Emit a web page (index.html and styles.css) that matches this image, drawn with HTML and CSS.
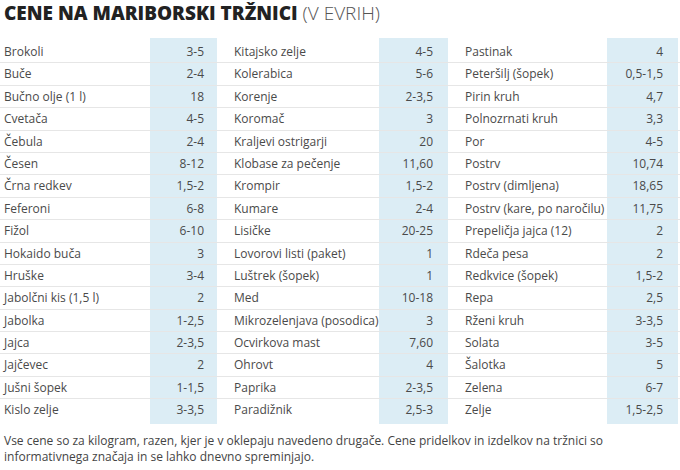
FILE: index.html
```html
<!DOCTYPE html>
<html lang="sl">
<head>
<meta charset="utf-8">
<link rel="stylesheet" href="styles.css">
</head>
<body>
<h1 class="title"><b>CENE NA MARIBORSKI TRŽNICI</b> <span class="unit">(V EVRIH)</span></h1>
<div class="table">
  <div class="col c1">
    <div class="row"><span class="lbl">Brokoli</span><span class="val">3-5</span><span class="sp"></span></div>
    <div class="row"><span class="lbl">Buče</span><span class="val">2-4</span><span class="sp"></span></div>
    <div class="row"><span class="lbl">Bučno olje (1 l)</span><span class="val">18</span><span class="sp"></span></div>
    <div class="row"><span class="lbl">Cvetača</span><span class="val">4-5</span><span class="sp"></span></div>
    <div class="row"><span class="lbl">Čebula</span><span class="val">2-4</span><span class="sp"></span></div>
    <div class="row"><span class="lbl">Česen</span><span class="val">8-12</span><span class="sp"></span></div>
    <div class="row"><span class="lbl">Črna redkev</span><span class="val">1,5-2</span><span class="sp"></span></div>
    <div class="row"><span class="lbl">Feferoni</span><span class="val">6-8</span><span class="sp"></span></div>
    <div class="row"><span class="lbl">Fižol</span><span class="val">6-10</span><span class="sp"></span></div>
    <div class="row"><span class="lbl">Hokaido buča</span><span class="val">3</span><span class="sp"></span></div>
    <div class="row"><span class="lbl">Hruške</span><span class="val">3-4</span><span class="sp"></span></div>
    <div class="row"><span class="lbl">Jabolčni kis (1,5 l)</span><span class="val">2</span><span class="sp"></span></div>
    <div class="row"><span class="lbl">Jabolka</span><span class="val">1-2,5</span><span class="sp"></span></div>
    <div class="row"><span class="lbl">Jajca</span><span class="val">2-3,5</span><span class="sp"></span></div>
    <div class="row"><span class="lbl">Jajčevec</span><span class="val">2</span><span class="sp"></span></div>
    <div class="row"><span class="lbl">Jušni šopek</span><span class="val">1-1,5</span><span class="sp"></span></div>
    <div class="row"><span class="lbl">Kislo zelje</span><span class="val">3-3,5</span><span class="sp"></span></div>
  </div>
  <div class="col c2">
    <div class="row"><span class="lbl">Kitajsko zelje</span><span class="val">4-5</span><span class="sp"></span></div>
    <div class="row"><span class="lbl">Kolerabica</span><span class="val">5-6</span><span class="sp"></span></div>
    <div class="row"><span class="lbl">Korenje</span><span class="val">2-3,5</span><span class="sp"></span></div>
    <div class="row"><span class="lbl">Koromač</span><span class="val">3</span><span class="sp"></span></div>
    <div class="row"><span class="lbl">Kraljevi ostrigarji</span><span class="val">20</span><span class="sp"></span></div>
    <div class="row"><span class="lbl">Klobase za pečenje</span><span class="val">11,60</span><span class="sp"></span></div>
    <div class="row"><span class="lbl">Krompir</span><span class="val">1,5-2</span><span class="sp"></span></div>
    <div class="row"><span class="lbl">Kumare</span><span class="val">2-4</span><span class="sp"></span></div>
    <div class="row"><span class="lbl">Lisičke</span><span class="val">20-25</span><span class="sp"></span></div>
    <div class="row"><span class="lbl">Lovorovi listi (paket)</span><span class="val">1</span><span class="sp"></span></div>
    <div class="row"><span class="lbl">Luštrek (šopek)</span><span class="val">1</span><span class="sp"></span></div>
    <div class="row"><span class="lbl">Med</span><span class="val">10-18</span><span class="sp"></span></div>
    <div class="row"><span class="lbl">Mikrozelenjava (posodica)</span><span class="val">3</span><span class="sp"></span></div>
    <div class="row"><span class="lbl">Ocvirkova mast</span><span class="val">7,60</span><span class="sp"></span></div>
    <div class="row"><span class="lbl">Ohrovt</span><span class="val">4</span><span class="sp"></span></div>
    <div class="row"><span class="lbl">Paprika</span><span class="val">2-3,5</span><span class="sp"></span></div>
    <div class="row"><span class="lbl">Paradižnik</span><span class="val">2,5-3</span><span class="sp"></span></div>
  </div>
  <div class="col c3">
    <div class="row"><span class="lbl">Pastinak</span><span class="val">4</span><span class="sp"></span></div>
    <div class="row"><span class="lbl">Peteršilj (šopek)</span><span class="val">0,5-1,5</span><span class="sp"></span></div>
    <div class="row"><span class="lbl">Pirin kruh</span><span class="val">4,7</span><span class="sp"></span></div>
    <div class="row"><span class="lbl">Polnozrnati kruh</span><span class="val">3,3</span><span class="sp"></span></div>
    <div class="row"><span class="lbl">Por</span><span class="val">4-5</span><span class="sp"></span></div>
    <div class="row"><span class="lbl">Postrv</span><span class="val">10,74</span><span class="sp"></span></div>
    <div class="row"><span class="lbl">Postrv (dimljena)</span><span class="val">18,65</span><span class="sp"></span></div>
    <div class="row"><span class="lbl">Postrv (kare, po naročilu)</span><span class="val">11,75</span><span class="sp"></span></div>
    <div class="row"><span class="lbl">Prepeličja jajca (12)</span><span class="val">2</span><span class="sp"></span></div>
    <div class="row"><span class="lbl">Rdeča pesa</span><span class="val">2</span><span class="sp"></span></div>
    <div class="row"><span class="lbl">Redkvice (šopek)</span><span class="val">1,5-2</span><span class="sp"></span></div>
    <div class="row"><span class="lbl">Repa</span><span class="val">2,5</span><span class="sp"></span></div>
    <div class="row"><span class="lbl">Rženi kruh</span><span class="val">3-3,5</span><span class="sp"></span></div>
    <div class="row"><span class="lbl">Solata</span><span class="val">3-5</span><span class="sp"></span></div>
    <div class="row"><span class="lbl">Šalotka</span><span class="val">5</span><span class="sp"></span></div>
    <div class="row"><span class="lbl">Zelena</span><span class="val">6-7</span><span class="sp"></span></div>
    <div class="row"><span class="lbl">Zelje</span><span class="val">1,5-2,5</span><span class="sp"></span></div>
  </div>
</div>
<p class="note">Vse cene so za kilogram, razen, kjer je v oklepaju navedeno drugače. Cene pridelkov in izdelkov na tržnici so informativnega značaja in se lahko dnevno spreminjajo.</p>
</body>
</html>
```

FILE: styles.css
```css
html, body {
  margin: 0;
  padding: 0;
  background: #fff;
}
body {
  width: 680px;
  height: 470px;
  overflow: hidden;
  font-family: "Open Sans", "Liberation Sans", sans-serif;
  color: #4a4a4a;
}
.title {
  margin: 0;
  padding-left: 4px;
  font-size: 19px;
  line-height: 26px;
  font-weight: 700;
  color: #222;
  white-space: nowrap;
}
.title .unit {
  font-weight: 300;
  color: #555;
}
.table {
  display: grid;
  grid-template-columns: 230px 231px 219px;
  margin-top: 12px;
}
.col {
  display: flex;
  flex-direction: column;
}
.row {
  display: flex;
  height: 22.4px;
  box-sizing: border-box;
  border-bottom: 1px solid #e6e6e6;
  font-size: 12px;
  line-height: 21px;
}
.row:last-child {
  border-bottom: none;
}
.row:first-child {
  height: 25.4px;
}
.row:first-child > span {
  padding-top: 3px;
}
.row:last-child {
  height: 24.4px;
}
.row:last-child > span {
  padding-bottom: 3px;
}
.lbl {
  flex: 1;
  padding-left: 4px;
  white-space: nowrap;
}
.val {
  width: 67px;
  box-sizing: border-box;
  padding-right: 13px;
  text-align: right;
  background: #dcedf5;
}
.sp {
  width: 13px;
}
.c2 .val { width: 69px; padding-right: 15px; }
.c3 .val { width: 71px; padding-right: 15px; }
.c3 .sp { width: 2px; }
.note {
  margin: 9px 0 0;
  padding-left: 4px;
  width: 620px;
  font-size: 12px;
  line-height: 16px;
  color: #444;
}
```
